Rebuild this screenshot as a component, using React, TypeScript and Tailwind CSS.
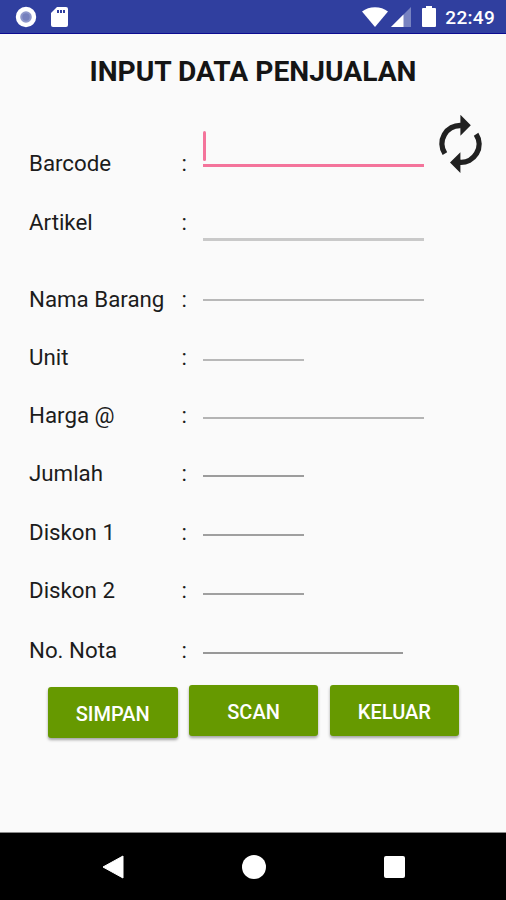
import { clsx } from "clsx";

type Field = {
  label: string;
  row: string;
  input: string;
  focused?: boolean;
};

const fields: Field[] = [
  { label: "Barcode", row: "h-[79px]", input: "h-[37px] w-[221px]", focused: true },
  { label: "Artikel", row: "h-[77px]", input: "h-8 w-[221px] border-b-3 border-[#c9c9c9]" },
  { label: "Nama Barang", row: "h-[58px]", input: "h-[15px] w-[221px] border-b-2 border-[#b8b8b8]" },
  { label: "Unit", row: "h-[58px]", input: "h-[17px] w-[101px] border-b-2 border-[#b8b8b8]" },
  { label: "Harga @", row: "h-[58px]", input: "h-[17px] w-[221px] border-b-2 border-[#b4b4b4]" },
  { label: "Jumlah", row: "h-[59px]", input: "h-[17px] w-[101px] border-b-2 border-[#9c9c9c]" },
  { label: "Diskon 1", row: "h-[58px]", input: "h-[17px] w-[101px] border-b-2 border-[#9f9f9f]" },
  { label: "Diskon 2", row: "h-[60px]", input: "h-[18px] w-[101px] border-b-2 border-[#a0a0a0]" },
  { label: "No. Nota", row: "h-12", input: "h-[17px] w-[200px] border-b-2 border-[#989898]" },
];

function StatusBar() {
  return (
    <header className="flex h-[34px] shrink-0 items-center border-b border-[#0c0c91] bg-[#303f9f] text-white">
      <svg className="ml-[15px] h-[22px] w-[22px]" viewBox="0 0 22 22">
        <circle cx="11" cy="11" r="8" fill="#8f98cb" stroke="#fff" strokeWidth="4.4" />
        <circle cx="11" cy="11" r="3.7" fill="#7680bd" />
      </svg>
      <svg className="mt-px ml-[14px] h-5 w-[17px]" viewBox="0 0 17 20">
        <path d="M6 0h9a2 2 0 0 1 2 2v16a2 2 0 0 1-2 2H2a2 2 0 0 1-2-2V6z" fill="#fff" />
        <path d="M6 3h2v3H6zM9 3h2v3H9zM12 3h2v3h-2z" fill="#303f9f" />
      </svg>
      <svg className="mt-px ml-auto h-5 w-[26px]" viewBox="0 0 26 20">
        <path d="M0 4.6C7-1.2 19-1.2 26 4.6L13 20z" fill="#fff" />
      </svg>
      <svg className="mt-px ml-[3px] h-5 w-5" viewBox="0 0 20 20">
        <path d="M20 0v20H0z" fill="#7883c1" />
        <path d="M12.5 7.5V20H0z" fill="#fff" />
      </svg>
      <svg className="ml-[11px] h-[21px] w-[14px]" viewBox="0 0 14 21">
        <path d="M4 0h6v2h3a1 1 0 0 1 1 1v17a1 1 0 0 1-1 1H1a1 1 0 0 1-1-1V3a1 1 0 0 1 1-1h3z" fill="#fff" />
      </svg>
      <span className="mr-[11px] ml-[9px] pt-[3px] text-[19px] leading-6 font-medium tracking-[0.3px]">
        22:49
      </span>
    </header>
  );
}

function RefreshIcon() {
  return (
    <svg className="h-[60px] w-[43px]" viewBox="0 0 43 60">
      <g fill="none" stroke="#212121" strokeWidth="5.4">
        <path d="M5.9 39.6A18.2 18.2 0 0 1 22 11.5" />
        <path d="M37.1 20.2A18.2 18.2 0 0 1 20.5 48.3" />
      </g>
      <path d="M21.4.8 31.8 11.3 21.4 21.8zM21.4 38.2V59L11 48.6z" fill="#212121" />
    </svg>
  );
}

function FieldRow({ label, row, input, focused }: Field) {
  return (
    <div className={clsx("flex items-start", row)}>
      <label className={clsx("w-[152.5px]", focused && "pt-5")}>{label}</label>
      <span className={clsx("w-[21.5px]", focused && "pt-5")}>:</span>
      {focused ? (
        <div className={clsx("border-b-3 border-[#f4749b]", input)}>
          <div className="mt-px h-[30px] w-[3px] rounded-sm bg-[#f4749b]" />
        </div>
      ) : (
        <input aria-label={label} className={clsx("block outline-none", input)} />
      )}
    </div>
  );
}

const buttonClass =
  "h-[51px] w-[129.5px] rounded-[3px] bg-[#669900] pt-0.5 text-[20px] font-medium text-white shadow-[0_2px_3px_rgba(0,0,0,0.35)]";

export default function App() {
  return (
    <div className="flex h-[900px] w-[506px] flex-col overflow-hidden bg-[#fafafa] font-[Roboto,sans-serif] text-[#1c1c1c]">
      <StatusBar />
      <main className="flex grow flex-col">
        <h1 className="h-24 pt-[22px] text-center text-[28.2px] leading-8 font-bold text-[#151515]">
          INPUT DATA PENJUALAN
        </h1>
        <div className="flex h-[555px] items-start pl-[29px] text-[22.3px] leading-[26px]">
          <form className="w-[395px]">
            {fields.map((field) => (
              <FieldRow key={field.label} {...field} />
            ))}
          </form>
          <button aria-label="Refresh" className="-mt-4 ml-[15px]">
            <RefreshIcon />
          </button>
        </div>
        <div className="flex gap-[11.3px] pl-12">
          <button className={clsx("mt-0.5", buttonClass)}>SIMPAN</button>
          <button className={buttonClass}>SCAN</button>
          <button className={buttonClass}>KELUAR</button>
        </div>
      </main>
      <nav className="h-[68px] shrink-0 border-t border-[#8a8a8a] bg-black">
        <div className="flex h-[67px] items-center pl-[102px]">
          <svg className="h-6 w-[22px]" viewBox="0 0 22 24">
            <path d="M1 12 21 1v22z" fill="#fff" stroke="#fff" strokeLinejoin="round" />
          </svg>
          <div className="ml-[118px] h-6 w-6 rounded-full bg-white" />
          <div className="ml-[117.5px] h-[22px] w-[21px] rounded-[2px] bg-white" />
        </div>
      </nav>
    </div>
  );
}
